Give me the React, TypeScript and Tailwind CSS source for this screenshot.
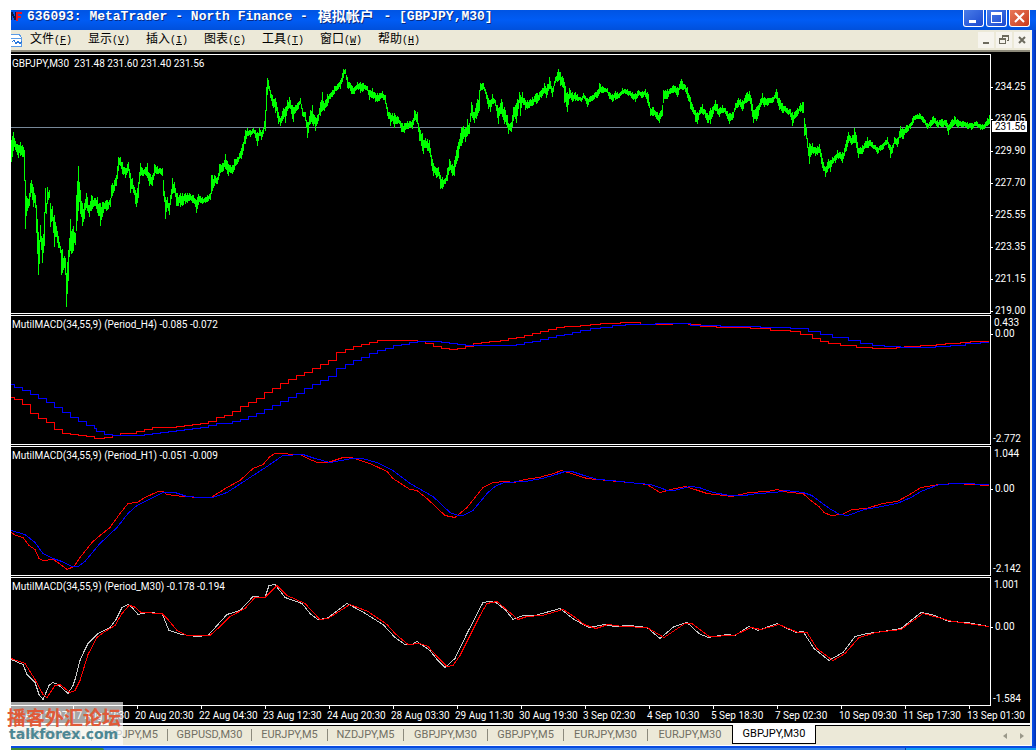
import type { ReactNode } from "react";

type Point = [number, number];

// x, high, low for the price bars
const PRICE_DATA = `
11,140,161 13,132,150 15,141,149 18,145,157 20,142,155 23,147,156 24,150,180 25,180,228 27,198,210 29,193,205
30,183,196 31,180,192 33,187,206 35,195,207 36,205,232 38,232,274 39,240,263 40,225,241 42,238,262 44,212,245
45,188,212 46,203,213 47,187,203 49,190,197 50,203,226 52,206,220 54,215,246 56,226,236 58,236,247 60,246,252
61,250,274 62,249,272 64,256,267 65,258,274 66,273,306 68,250,280 70,219,250 71,231,253 73,226,250 75,233,244
76,195,230 78,166,210 80,190,213 82,203,225 84,203,218 86,193,207 89,205,216 91,195,210 94,198,205 97,197,212
100,203,225 103,202,212 106,200,210 110,198,206 111,185,197 114,180,190 116,175,185 118,157,170 120,157,165
122,162,173 125,168,177 128,162,170 130,173,192 132,178,188 135,190,203 136,193,206 138,182,197 139,172,183
140,163,175 143,170,175 147,163,177 149,173,185 152,175,185 154,164,175 157,166,173 162,168,175 163,180,195
165,197,218 167,197,207 169,203,214 172,178,193 174,182,192 176,193,205 180,193,206 185,193,203 189,193,200
193,195,202 196,200,212 198,194,204 202,197,203 205,197,202 210,193,199 211,175,193 214,175,185 217,177,183
219,164,175 223,163,170 225,154,168 228,164,175 232,165,173 234,159,169 237,157,163 241,148,158 245,130,143
247,128,135 250,130,136 253,128,132 257,132,145 259,128,135 261,132,139 263,128,133 265,110,130 266,87,110
267,78,94 268,80,88 270,90,97 272,95,105 275,98,112 276,102,110 278,112,123 280,118,125 283,108,118 285,107,122
287,100,110 289,97,107 293,107,121 295,105,112 298,102,108 300,98,103 302,108,115 305,112,120 307,122,137
310,110,123 312,105,123 315,117,130 317,115,123 320,102,115 322,92,110 324,103,110 327,94,105 330,93,98
334,86,93 338,83,88 340,80,88 343,69,77 345,69,73 347,77,87 351,85,93 354,87,93 357,82,88 360,82,92 363,83,90
367,86,90 369,90,99 372,88,97 375,93,101 379,93,100 382,91,97 385,95,103 387,107,115 390,113,125 392,113,120
394,113,127 398,117,122 401,123,131 404,123,132 407,121,128 412,120,128 414,110,120 417,112,123 419,127,140
422,133,150 423,140,153 425,138,147 429,140,152 431,155,165 433,163,175 436,168,177 438,167,175 440,175,188
442,177,188 445,178,183 447,168,180 449,159,170 452,164,175 454,160,175 456,150,163 458,142,157 461,128,145
463,126,138 465,128,141 467,119,135 469,123,133 471,102,115 474,112,122 476,103,118 479,90,110 480,83,90
483,83,88 486,92,98 488,98,108 490,100,111 492,94,103 495,100,105 498,108,123 501,99,113 504,107,123 507,115,127
508,123,133 511,122,131 513,107,120 516,103,122 519,92,102 520,95,115 522,92,102 525,100,109 529,100,107
532,97,105 536,93,103 539,92,99 541,90,97 544,83,92 546,88,97 549,77,88 552,88,96 555,77,82 558,69,80 560,72,85
563,78,87 564,82,102 567,92,111 569,88,98 572,92,101 575,92,100 581,98,101 583,93,97 587,98,106 590,96,101
594,93,98 597,90,97 599,83,93 603,87,92 607,88,92 609,92,98 612,94,101 615,91,99 619,93,97 622,88,93 627,89,94
632,92,98 635,93,101 638,90,95 641,92,97 645,89,96 648,94,105 650,108,115 653,107,115 656,112,118 659,113,122
662,105,115 663,90,102 667,89,98 670,88,93 673,85,92 677,87,96 681,79,88 685,85,91 687,87,97 690,97,108
693,107,113 695,110,121 697,112,123 700,107,113 702,104,113 705,110,117 707,113,122 710,108,123 713,106,113
715,100,110 719,108,116 722,105,112 725,108,113 729,113,123 733,112,117 735,103,109 738,98,106 742,100,110
746,93,102 749,91,100 751,98,110 753,110,122 756,107,120 758,105,115 762,93,102 764,97,106 768,98,104
773,97,101 776,89,98 779,98,109 782,103,112 787,108,113 790,109,116 792,112,125 796,110,116 800,103,111
803,102,112 804,118,135 806,128,138 808,147,155 809,143,163 812,143,152 815,147,155 819,144,152 821,153,163
823,162,170 825,167,176 828,159,168 830,160,171 832,157,163 835,155,162 837,150,157 842,152,162 844,148,155
846,140,150 848,132,142 851,138,144 854,128,142 856,135,147 858,148,157 862,145,153 867,137,147 872,142,147
877,147,153 880,145,150 883,143,148 887,137,143 890,145,157 892,145,152 894,137,143 897,138,146 900,126,137
903,129,138 906,125,132 910,123,128 913,116,122 917,114,118 919,113,118 923,117,122 927,123,128 930,120,127
933,116,123 937,120,127 941,119,126 946,120,126 948,125,134 951,120,127 954,116,124 958,120,127 963,121,126
971,123,129 976,121,125 980,124,129 984,124,128 987,118,125 989,115,123`;

const H4_RED = `
14,397 22,399 30,404 38,413 46,418 54,422 62,429 70,433 78,434 86,435 94,436 104,438 112,437 120,435 136,433
144,431 152,429 176,427 184,426 192,425 200,424 208,423 216,421 224,417 232,415 240,411 248,406 256,402 264,398
272,392 280,388 288,383 296,379 304,375 312,372 320,368 328,364 336,360 345,352 353,349 361,346 369,344 377,342
417,340 425,341 433,343 441,346 449,348 457,349 465,348 473,346 481,343 489,342 500,341 508,340 516,338 524,337
532,335 540,333 548,331 556,329 564,327 580,326 590,325 600,324 620,323 640,322 655,324 672,324 688,323 700,324
716,326 750,327 770,328 790,330 800,331 812,334 820,338 828,341 840,343 856,345 872,347 896,348 904,347 920,346
936,345 945,344 960,343 970,342 989,341`;

const H4_BLUE = `
14,384 22,387 30,390 38,394 46,398 54,402 62,407 70,412 78,417 86,421 94,425 96,428 104,431 112,434 144,435
152,434 160,433 168,432 176,431 184,430 192,429 200,428 208,427 216,425 232,423 240,421 248,419 256,416 264,413
272,409 280,405 288,401 296,397 304,393 312,388 320,384 328,380 336,376 345,368 353,364 361,360 369,357 377,353
385,350 393,348 401,345 409,344 417,342 441,341 449,342 457,343 465,344 473,345 516,345 524,344 532,342 540,341
548,339 556,337 564,335 572,334 580,332 590,330 600,328 612,327 625,325 640,324 655,324 690,323 720,325 760,326
790,327 808,328 820,331 832,334 848,337 860,340 872,343 884,345 900,346 935,347 950,346 965,345 980,343 989,342`;

const H1_RED = `
11,532 16,535 23,537 29,545 35,549 39,558 43,560 53,559 58,562 67,569 74,566 80,557 92,542 100,535 110,527
120,513 128,503 137,502 145,497 158,491 163,491 167,494 183,496 200,497 211,497 227,487 240,480 253,468 263,464
270,456 275,453 300,454 308,458 317,462 328,462 343,457 352,457 360,460 370,463 387,471 393,478 410,489 417,490
428,499 445,515 455,517 467,507 483,487 493,482 506,481 514,482 525,479 539,477 546,475 554,473 561,470 568,472
587,478 608,480 629,482 647,484 660,492 671,489 685,486 695,489 707,493 732,496 749,492 768,491 777,489 789,492
803,493 812,501 819,506 824,512 831,515 842,514 852,509 866,508 883,503 897,501 908,495 921,487 939,484 958,483
970,484 989,485`;

const H1_BLUE = `
11,530 25,534 35,542 43,553 53,558 62,561 72,566 78,566 85,561 100,543 117,527 128,513 137,505 145,501 163,492
175,492 187,496 200,497 213,497 227,492 247,479 267,466 283,455 303,454 315,458 330,462 352,458 362,458 377,462
393,470 410,483 433,496 450,512 458,515 463,515 473,510 487,493 495,486 504,482 525,481 542,478 556,474 565,471
572,471 584,475 598,479 612,480 629,482 650,484 660,487 667,490 674,490 690,486 699,487 713,492 730,495 744,495
758,493 775,492 786,490 803,492 812,495 821,502 831,509 840,514 848,515 864,509 876,507 897,503 911,497 921,491
939,484 960,483 989,484`;

const M30_SILVER = `
11,659 23,664 27,674 35,682 39,694 43,699 49,685 53,682 58,684 68,693 73,685 76,676 80,660 84,651 88,643 98,633
110,627 116,619 122,607 128,604 133,608 138,614 147,612 162,613 169,630 182,634 197,636 208,635 217,625 227,614
240,610 253,596 265,597 269,585 275,584 285,597 302,603 310,613 318,619 327,618 347,603 362,611 383,624 395,637
405,644 412,644 417,641 430,650 437,659 445,667 455,658 467,633 483,602 490,601 496,602 506,610 513,619 523,615
535,615 560,608 574,619 589,627 605,624 615,626 629,625 647,627 660,638 674,626 687,622 699,633 708,637 727,634
735,635 749,626 758,630 777,623 796,632 803,631 814,648 829,660 843,652 855,636 867,633 883,631 901,628 921,612
932,614 949,621 967,622 989,626`;

const M30_RED = `
11,658 25,663 35,679 43,694 47,697 55,685 60,684 70,692 75,690 80,680 88,654 97,637 105,631 115,625 122,613
129,605 134,606 141,612 162,613 168,619 177,630 187,635 210,635 220,626 230,616 245,608 255,597 265,597 272,590
277,585 287,595 305,603 320,619 328,618 350,604 368,611 387,624 395,633 408,644 420,643 428,646 438,657 447,666
453,665 460,655 470,635 480,615 487,603 497,601 504,607 518,619 527,616 542,615 563,609 574,616 584,624 596,628
608,624 622,626 647,627 664,637 685,623 692,623 709,636 734,635 751,627 761,629 779,624 798,632 807,632 817,648
833,660 845,653 859,637 876,632 901,629 923,613 953,621 989,626`;

const MENUS = [
  ["文件", "F"],
  ["显示", "V"],
  ["插入", "I"],
  ["图表", "C"],
  ["工具", "T"],
  ["窗口", "W"],
  ["帮助", "H"],
];

const PRICES = ["234.25", "232.05", "229.90", "227.70", "225.55", "223.35", "221.15", "219.00"];

const DATES = [
  "17 Aug 12:30",
  "20 Aug 20:30",
  "22 Aug 04:30",
  "23 Aug 12:30",
  "24 Aug 20:30",
  "28 Aug 03:30",
  "29 Aug 11:30",
  "30 Aug 19:30",
  "3 Sep 02:30",
  "4 Sep 10:30",
  "5 Sep 18:30",
  "7 Sep 02:30",
  "10 Sep 09:30",
  "11 Sep 17:30",
  "13 Sep 01:30",
];

const TABS = [
  "GBPJPY,M30",
  "GBPJPY,M5",
  "GBPUSD,M30",
  "EURJPY,M5",
  "NZDJPY,M5",
  "GBPJPY,M30",
  "GBPJPY,M5",
  "EURJPY,M30",
  "EURJPY,M30",
];

function parse(data: string) {
  return data.trim().split(/\s+/).map((p) => p.split(",").map(Number));
}

function linePath(data: string) {
  return "M" + parse(data).map(([x, y]) => `${x} ${y + 0.5}`).join("L");
}

function stepPath(data: string) {
  const pts = parse(data) as Point[];
  return `M11 ${pts[0][1] + 0.5}` + pts.map(([x, y]) => `V${y + 0.5}H${x}`).join("");
}

const CUTS = [0.05, 0.22, 0, 0.3, 0.12];

// one bar per pixel column, a bit shorter between the known highs and lows
function barPath(data: string) {
  const pts = parse(data);
  let d = "";
  for (let i = 0; i < pts.length; i++) {
    const [x, hi, lo] = pts[i];
    d += `M${x + 0.5} ${hi}V${lo + 1}`;
    const next = pts[i + 1];
    if (!next) break;
    for (let c = x + 1; c < next[0]; c++) {
      const t = (c - x) / (next[0] - x);
      const top = hi + (next[1] - hi) * t;
      const bottom = lo + (next[2] - lo) * t;
      const up = (bottom - top) * CUTS[c % 5];
      const down = (bottom - top) * CUTS[(c * 3 + 1) % 5];
      d += `M${c + 0.5} ${Math.round(top + up)}V${Math.round(bottom - down) + 1}`;
    }
  }
  return d;
}

function Panel({ title, view, height, axis, children }: {
  title: string;
  view: string;
  height: string;
  axis: ReactNode;
  children: ReactNode;
}) {
  return (
    <section className={`flex ${height}`}>
      <div className="relative min-w-0 flex-1 border-y border-r border-white">
        <svg
          viewBox={view}
          preserveAspectRatio="none"
          shapeRendering="crispEdges"
          fill="none"
          className="block h-full w-full"
        >
          {children}
        </svg>
        <h2 className="absolute left-px top-[3px] whitespace-pre leading-[12px]">{title}</h2>
      </div>
      <div className="relative flex w-[39px] flex-col">{axis}</div>
    </section>
  );
}

function Tick({ children }: { children: ReactNode }) {
  return (
    <span className="flex items-center gap-[2px] leading-[10px]">
      <span className="h-px w-[2px] bg-white" />
      {children}
    </span>
  );
}

function TitleBar() {
  const button =
    "flex h-[17px] w-[21px] items-center justify-center rounded-b-[3px] border border-t-0 border-white";
  return (
    <header className="flex h-5 items-start justify-between bg-linear-to-b from-[#0054e3] via-[#005cf5] to-[#0050dc] pr-[6px]">
      <h1 className="flex items-center gap-1 whitespace-pre font-['Liberation_Mono','Noto_Sans_CJK_SC',monospace] text-[13px] font-bold leading-[14px] text-white [text-shadow:1px_1px_0_#0a2a80]">
        <svg width="12" height="12" viewBox="0 0 12 12" shapeRendering="crispEdges">
          <path d="M0 1h2v2h1v2h1V1h1v8H3V7H2V5H1v4H0z" fill="#101840" />
          <path d="M5 1h6v2H7v2h3v2H7v3H5z" fill="#f0141e" />
        </svg>
        <span className="flex h-[14px] items-center">
          <span>636093: MetaTrader - North Finance - </span>
          <span className="px-[2px] text-[14px]">模拟帐户</span>
          <span> - [GBPJPY,M30]</span>
        </span>
      </h1>
      <div className="flex gap-[2px]">
        <button type="button" aria-label="最小化" className={`${button} bg-linear-to-br from-[#4a7ce8] to-[#1c48d0]`}>
          <svg width="15" height="15" viewBox="0 0 15 15"><path d="M3 9h7v3H3z" fill="#fff" /></svg>
        </button>
        <button type="button" aria-label="最大化" className={`${button} bg-linear-to-br from-[#4a7ce8] to-[#1c48d0]`}>
          <svg width="15" height="15" viewBox="0 0 15 15" shapeRendering="crispEdges">
            <path d="M2 1h11v11H2zM3 4v7h9V4z" fill="#fff" fillRule="evenodd" />
          </svg>
        </button>
        <button type="button" aria-label="关闭" className={`${button} bg-linear-to-br from-[#e87858] to-[#c83818]`}>
          <svg width="15" height="15" viewBox="0 0 15 15">
            <path d="M3 2l9 9M12 2l-9 9" stroke="#fff" strokeWidth="2" />
          </svg>
        </button>
      </div>
    </header>
  );
}

function MenuBar() {
  const button = "flex h-4 w-4 items-center justify-center bg-[#f6f4ee]";
  return (
    <nav className="flex h-5 items-center justify-between bg-[#ece9d8]">
      <div className="flex items-center">
        <svg width="11" height="16" viewBox="0 0 11 16" fill="none" shapeRendering="crispEdges">
          <path d="M0 2h8l2 3v9H0" fill="#fff" stroke="#5a9be6" />
          <path d="M0 6h11" stroke="#5a9be6" />
          <path d="M1 10l2-2 2 4 2-3 2 3 2-3" stroke="#2a78dc" />
        </svg>
        {MENUS.map(([name, key]) => (
          <button
            key={key}
            type="button"
            className="w-[58px] whitespace-nowrap text-center font-['Liberation_Mono','Noto_Sans_CJK_SC',monospace] text-[12px] leading-[18px] text-black"
          >
            {name}
            <span className="text-[10px]">(<u>{key}</u>)</span>
          </button>
        ))}
      </div>
      <div className="flex gap-[2px]">
        <button type="button" aria-label="最小化图表" className={button}>
          <svg width="12" height="12" viewBox="0 0 12 12"><path d="M3 8h6v2H3z" fill="#6c6a5e" /></svg>
        </button>
        <button type="button" aria-label="还原图表" className={button}>
          <svg width="12" height="12" viewBox="0 0 12 12" shapeRendering="crispEdges">
            <path d="M4 1h7v6H9V6h1V3H5v1H4zM1 4h7v6H1zM2 6v3h5V6z" fill="#6c6a5e" fillRule="evenodd" />
          </svg>
        </button>
        <button type="button" aria-label="关闭图表" className={button}>
          <svg width="12" height="12" viewBox="0 0 12 12">
            <path d="M3 3l6 6M9 3l-6 6" stroke="#6c6a5e" strokeWidth="2" />
          </svg>
        </button>
      </div>
    </nav>
  );
}

function TabStrip() {
  return (
    <div className="flex h-[20px] justify-between border-t border-black bg-[#ece9d8] font-[Roboto,sans-serif] text-[11px] leading-[16px] text-[#716f64]">
      <div className="-ml-[3px] flex">
        {TABS.map((tab, i) => (
          <button
            key={i}
            type="button"
            className={`flex h-[17px] items-center justify-center ${tab.endsWith("M30") ? "w-[84px]" : "w-[76px]"}`}
          >
            <span className="flex-1 text-center">{tab}</span>
            {i < TABS.length - 1 && <span className="h-3 w-px bg-[#8c8a7c]" />}
          </button>
        ))}
        <button
          type="button"
          className="-mt-px h-[19px] w-[84px] border border-t-0 border-black bg-white text-center text-black"
        >
          GBPJPY,M30
        </button>
      </div>
      <div className="flex items-center">
        <button type="button" aria-label="向左" className="flex w-[17px] justify-center">
          <svg width="4" height="6" viewBox="0 0 4 6"><path d="M4 0v6L0 3z" fill="#9a9889" /></svg>
        </button>
        <button type="button" aria-label="向右" className="flex w-[17px] justify-center">
          <svg width="4" height="6" viewBox="0 0 4 6"><path d="M0 0v6l4-3z" fill="#9a9889" /></svg>
        </button>
      </div>
    </div>
  );
}

export default function App() {
  return (
    <div className="relative overflow-hidden bg-white pl-[11px] pt-[10px]">
      <TitleBar />
      <div className="flex">
        <div className="min-w-0 flex-1">
          <MenuBar />
          <div className="h-[2px] bg-[#8c8979]" />
          <main className="flex flex-col gap-px bg-black pt-[2px] font-[Roboto,sans-serif] text-[10px] text-white">
            <Panel
              title="GBPJPY,M30  231.48 231.60 231.40 231.56"
              view="11 55 979 258"
              height="h-[260px]"
              axis={
                <>
                  <div className="flex h-full flex-col pt-[17px]">
                    {PRICES.map((p) => (
                      <div key={p} className="flex h-8 shrink-0 items-center">
                        <Tick>{p}</Tick>
                      </div>
                    ))}
                  </div>
                  <span className="absolute left-[1px] right-[3px] top-[67px] bg-white pl-[3px] leading-[11px] text-black">
                    231.56
                  </span>
                </>
              }
            >
              <path d="M11 127.5H990" stroke="#778899" />
              <path d={barPath(PRICE_DATA)} stroke="#00ff00" />
            </Panel>
            <Panel
              title="MutilMACD(34,55,9) (Period_H4) -0.085 -0.072"
              view="11 316 979 128"
              height="h-[130px]"
              axis={
                <div className="flex h-full flex-col gap-px pb-px pt-[3px]">
                  <span className="pl-[3px] leading-[10px]">0.433</span>
                  <Tick>0.00</Tick>
                  <span className="mt-auto pl-[2px] leading-[10px]">-2.772</span>
                </div>
              }
            >
              <path d={stepPath(H4_RED)} stroke="#ff0000" />
              <path d={stepPath(H4_BLUE)} stroke="#0000ff" />
            </Panel>
            <Panel
              title="MutilMACD(34,55,9) (Period_H1) -0.051 -0.009"
              view="11 447 979 128"
              height="h-[130px]"
              axis={
                <div className="flex h-full flex-col gap-[25px] pb-[2px] pt-[3px]">
                  <span className="pl-[3px] leading-[10px]">1.044</span>
                  <Tick>0.00</Tick>
                  <span className="mt-auto pl-[2px] leading-[10px]">-2.142</span>
                </div>
              }
            >
              <path d={linePath(H1_RED)} stroke="#ff0000" />
              <path d={linePath(H1_BLUE)} stroke="#0000ff" />
            </Panel>
            <Panel
              title="MutilMACD(34,55,9) (Period_M30) -0.178 -0.194"
              view="11 578 979 127"
              height="h-[129px]"
              axis={
                <div className="flex h-full flex-col gap-[32px] pb-[2px] pt-[3px]">
                  <span className="pl-[3px] leading-[10px]">1.001</span>
                  <Tick>0.00</Tick>
                  <span className="mt-auto pl-[2px] leading-[10px]">-1.584</span>
                </div>
              }
            >
              <path d={linePath(M30_SILVER)} stroke="#c8c8c8" />
              <path d={linePath(M30_RED)} stroke="#ff0000" />
            </Panel>
            <div className="-mt-px flex h-[17px] overflow-hidden whitespace-nowrap leading-[14px]">
              <span className="w-[62px] shrink-0 pt-[3px]">16 Aug 2007</span>
              {DATES.map((d) => (
                <div key={d} className="w-16 shrink-0">
                  <div className="h-[3px] w-px bg-white" />
                  <span className="-ml-[2px]">{d}</span>
                </div>
              ))}
            </div>
          </main>
          <div className="h-[2px] bg-white" />
          <TabStrip />
          <div className="h-px bg-white" />
        </div>
        <div className="w-[2px] bg-[#f4f2ea]" />
        <div className="w-1 bg-linear-to-r from-[#0a50f0] to-[#0030b0]" />
      </div>
      <div className="h-[2px] bg-[#0a4be0]" />
      <footer className="flex h-[2px] bg-[#3a80e8]">
        <div className="w-[93px] rounded-tr bg-[#3c8c34]" />
        <div className="ml-auto w-[131px] border-l border-[#0a3c9c] bg-[#129bee]" />
      </footer>

      <div className="absolute left-[11px] top-[702px] h-[43px] w-[112px] bg-white/65" />
      <div className="absolute left-[7px] top-[707px] whitespace-nowrap">
        <p className="font-['Noto_Sans_CJK_SC',sans-serif] text-[19px] font-bold leading-[20px] text-[#e05a38]">
          播客外汇论坛
        </p>
        <p className="pl-[2px] font-['DejaVu_Sans',sans-serif] text-[14px] font-bold leading-[14px] text-[#4d8794]">
          talkforex.com
        </p>
      </div>
    </div>
  );
}
